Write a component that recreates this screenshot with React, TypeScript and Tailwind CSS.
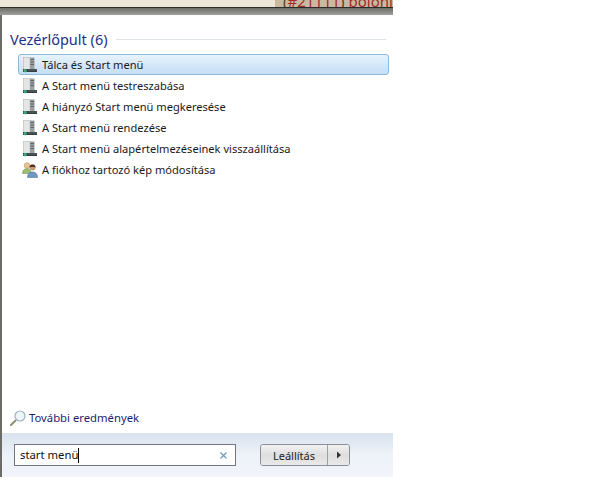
import React from 'react';

const results = [
  { label: 'Tálca és Start menü', icon: 'panel', active: true },
  { label: 'A Start menü testreszabása', icon: 'panel' },
  { label: 'A hiányzó Start menü megkeresése', icon: 'panel' },
  { label: 'A Start menü rendezése', icon: 'panel' },
  { label: 'A Start menü alapértelmezéseinek visszaállítása', icon: 'panel' },
  { label: 'A fiókhoz tartozó kép módosítása', icon: 'users' },
];

function PanelIcon() {
  return (
    <svg width="16" height="16" viewBox="0 0 16 16" className="shrink-0">
      <rect x="1.500" y="0.500" width="6.500" height="12" fill="#e4e6e5" stroke="#b4b8b8" strokeWidth="0.6" />
      <rect x="8" y="0.500" width="4.500" height="12" fill="#9a9fa1" />
      <rect x="8.500" y="2" width="3.500" height="1" fill="#5f6568" />
      <rect x="8.500" y="4.500" width="3.500" height="1" fill="#5f6568" />
      <rect x="8.500" y="7" width="3.500" height="1" fill="#5f6568" />
      <rect x="1" y="12" width="14" height="3" fill="#343d40" />
      <rect x="6" y="12.500" width="9" height="1" fill="#5f6b6f" />
      <circle cx="3.200" cy="13.600" r="1.800" fill="#3fa37a" />
    </svg>
  );
}

function UsersIcon() {
  return (
    <svg width="16" height="16" viewBox="0 0 16 16" className="shrink-0">
      <circle cx="5" cy="3.500" r="2.800" fill="#e8c391" stroke="#b08c55" strokeWidth="0.5" />
      <path d="M0.500 11.500c0-3.500 2-5 4.500-5s4 1.500 4 5z" fill="#9dbb73" stroke="#6f8d4d" strokeWidth="0.5" />
      <circle cx="10.500" cy="5.500" r="3" fill="#c99a6e" />
      <path d="M7.500 5.500a3 3 0 0 1 6 0c-1.500-1-4.500-1-6 0z" fill="#3d3026" />
      <path d="M5.500 15.500c0-4 2.200-5.500 5-5.500s5 1.500 5 5.500z" fill="#6f97c2" stroke="#44698f" strokeWidth="0.5" />
    </svg>
  );
}

function SearchIcon() {
  return (
    <svg width="16" height="16" viewBox="0 0 16 16" className="shrink-0">
      <path d="M1 15l4.500-4.500" stroke="#8a8f6f" strokeWidth="2" strokeLinecap="round" />
      <circle cx="10" cy="6" r="5" fill="#eef6fa" stroke="#9fb3ba" strokeWidth="1.200" />
    </svg>
  );
}

export default function App() {
  return (
    <div className="w-[603px] h-[493px] bg-white overflow-hidden font-['Noto_Sans','Open_Sans',sans-serif]">
      <div className="w-[393px]">
        {/* page behind the menu */}
        <div className="h-[7px] flex overflow-hidden bg-[#ece7d9]">
          <div className="w-[275px]" />
          <div className="flex-1 bg-[#c8b9a0] flex items-end pl-[8px] overflow-hidden">
            <span className="text-[#a52a2a] text-[15px] leading-[15px] whitespace-nowrap -mb-[2px]">
              <span className="text-[#5c3a2a]">(</span>#21111<span className="text-[#5c3a2a]">)</span> bolonic
            </span>
          </div>
        </div>
        <div className="h-[8px] border-t border-[#2c2c2a] bg-gradient-to-b from-[#6e6e68] to-[#a0a09c]" />

        {/* start menu */}
        <div className="border-l-2 border-[#6b6b68] h-[462px] flex flex-col">
          <div className="h-[418px] shrink-0 bg-white rounded-tl-[3px] flex flex-col pl-[8px] pr-[4px] pt-[15px]">
            <div className="flex items-center h-[18px] gap-[8px] pr-[3px]">
              <span className="text-[#1e3287] text-[14.5px] leading-none whitespace-nowrap">Vezérlőpult (6)</span>
              <div className="flex-1 h-px bg-[#dfe3ea]" />
            </div>
            <div className="mt-[6px] flex flex-col pl-[8px]">
              {results.map((r) => (
                <div
                  key={r.label}
                  className={`h-[21px] flex items-center gap-[4px] pl-[3px] rounded-[3px] border ${
                    r.active
                      ? 'border-[#8fb8d9] bg-gradient-to-b from-[#e8f3fc] to-[#c4def5]'
                      : 'border-transparent'
                  }`}
                >
                  {r.icon === 'panel' ? <PanelIcon /> : <UsersIcon />}
                  <span className="text-[11.1px] leading-none text-[#1a1a1a] whitespace-nowrap">{r.label}</span>
                </div>
              ))}
            </div>
            <div className="mt-auto mb-[7px] flex items-center gap-[3px]">
              <SearchIcon />
              <span className="text-[11.300px] leading-none text-[#1a1f70]">További eredmények</span>
            </div>
          </div>

          {/* footer */}
          <div className="h-[44px] shrink-0 bg-gradient-to-b from-[#d8e2ee] via-[#eef2f9] to-[#f1f4fa] flex items-center pl-[12px]">
            <div className="w-[222px] h-[22px] bg-white border border-[#6f7680] flex items-center pl-[5px] pr-[7px]">
              <span className="text-[11.300px] leading-none text-[#111] whitespace-nowrap">start menü</span>
              <span className="w-px h-[15px] bg-black" />
              <svg width="9" height="9" viewBox="0 0 9 9" className="ml-auto">
                <path d="M1.500 1.500l6 6M7.500 1.500l-6 6" stroke="#6a97b8" strokeWidth="1.100" />
              </svg>
            </div>
            <div className="ml-[24px] h-[22px] flex rounded-[3px] border border-[#8a9099] overflow-hidden">
              <div className="w-[67px] flex items-center justify-center border-r border-[#9aa0a8] bg-gradient-to-b from-[#f2f2f2] via-[#dedede] to-[#e9e9e9] text-[11px] leading-none text-[#222]">
                Leállítás
              </div>
              <div className="w-[21px] flex items-center justify-center bg-gradient-to-b from-[#f2f2f2] via-[#dedede] to-[#e9e9e9]">
                <svg width="6" height="8" viewBox="0 0 6 8">
                  <path d="M1 0.500l4 3.500-4 3.500z" fill="#333" />
                </svg>
              </div>
            </div>
          </div>
        </div>
      </div>
    </div>
  );
}
